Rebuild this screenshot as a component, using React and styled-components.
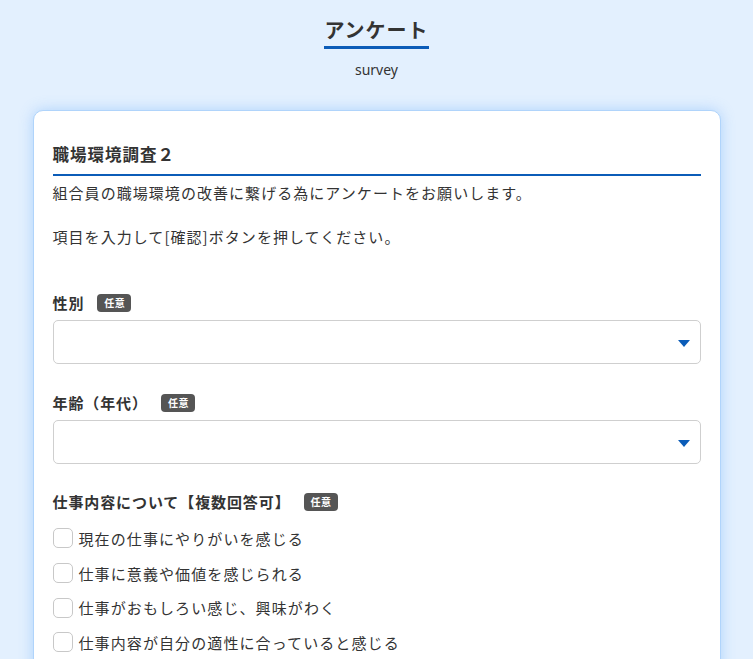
import React from "react";
import styled, { createGlobalStyle } from "styled-components";

const Global = createGlobalStyle`
  html, body { margin: 0; padding: 0; }
  body {
    background: #e3f0fe;
    font-family: "Noto Sans CJK JP", "Noto Sans", sans-serif;
    color: #333;
  }
`;

const Page = styled.div`
  display: flex;
  flex-direction: column;
  align-items: center;
  padding-top: 16px;
  min-height: 659px;
  box-sizing: border-box;
  overflow: hidden;
`;

const Title = styled.h1`
  margin: 0;
  font-size: 20px;
  line-height: 28px;
  font-weight: 700;
  letter-spacing: 0.05em;
  color: #333;
  padding-bottom: 2px;
  border-bottom: 3px solid #0b5cb8;
`;

const Subtitle = styled.div`
  font-family: "Noto Sans", sans-serif;
  font-size: 14px;
  line-height: 18px;
  margin-top: 12px;
  color: #333;
`;

const Card = styled.section`
  box-sizing: border-box;
  width: 688px;
  margin-top: 31px;
  background: #fff;
  border: 1px solid #b0d4fb;
  border-radius: 10px;
  box-shadow: 0 0 14px rgba(110, 175, 250, 0.45);
  padding: 31px 19px 40px;
`;

const Heading = styled.h2`
  margin: 0;
  font-size: 16.5px;
  line-height: 24px;
  font-weight: 700;
  letter-spacing: 0.06em;
  padding-bottom: 8px;
  border-bottom: 2px solid #0b5cb8;
`;

const Lead = styled.p`
  margin: ${(p) => p.$top}px 0 0;
  font-size: 15px;
  line-height: 24px;
  letter-spacing: 1.05px;
`;

const Field = styled.div`
  margin-top: ${(p) => p.$top}px;
`;

const LabelRow = styled.div`
  display: flex;
  align-items: center;
  gap: 13px;
  height: 24px;
`;

const Label = styled.span`
  font-size: 15px;
  font-weight: 700;
  letter-spacing: 0.9px;
  line-height: 24px;
`;

const Badge = styled.span`
  display: inline-flex;
  align-items: center;
  justify-content: center;
  height: 18px;
  padding: 0 6px 0 7px;
  border-radius: 4px;
  background: #555;
  color: #fff;
  font-size: 10px;
  font-weight: 700;
  letter-spacing: 0.5px;
  line-height: 1;
`;

const Select = styled.div`
  box-sizing: border-box;
  margin-top: 5px;
  height: 44px;
  border: 1px solid #cfcfcf;
  border-radius: 5px;
  background: #fff;
  display: flex;
  align-items: center;
  justify-content: flex-end;
  padding-right: 10px;
`;

const Arrow = styled.span`
  width: 0;
  height: 0;
  border-left: 6px solid transparent;
  border-right: 6px solid transparent;
  border-top: 7px solid #0b5cb8;
  margin-top: 2px;
`;

const Checks = styled.div`
  margin-top: 7px;
  display: flex;
  flex-direction: column;
`;

const CheckRow = styled.label`
  display: flex;
  align-items: center;
  gap: 6px;
  height: 34.7px;
  font-size: 15px;
  letter-spacing: 1.1px;
`;

const Box = styled.span`
  box-sizing: border-box;
  width: 20px;
  height: 20px;
  border: 1px solid #c8c8c8;
  border-radius: 5px;
  background: #fff;
  flex: none;
`;

const options = [
  "現在の仕事にやりがいを感じる",
  "仕事に意義や価値を感じられる",
  "仕事がおもしろい感じ、興味がわく",
  "仕事内容が自分の適性に合っていると感じる",
];

export default function App() {
  return (
    <>
      <Global />
      <Page>
        <Title>アンケート</Title>
        <Subtitle>survey</Subtitle>
        <Card>
          <Heading>職場環境調査２</Heading>
          <Lead $top={5}>組合員の職場環境の改善に繋げる為にアンケートをお願いします。</Lead>
          <Lead $top={20}>項目を入力して[確認]ボタンを押してください。</Lead>

          <Field $top={42}>
            <LabelRow>
              <Label>性別</Label>
              <Badge>任意</Badge>
            </LabelRow>
            <Select>
              <Arrow />
            </Select>
          </Field>

          <Field $top={27}>
            <LabelRow>
              <Label>年齢（年代）</Label>
              <Badge>任意</Badge>
            </LabelRow>
            <Select>
              <Arrow />
            </Select>
          </Field>

          <Field $top={26}>
            <LabelRow>
              <Label>仕事内容について【複数回答可】</Label>
              <Badge>任意</Badge>
            </LabelRow>
            <Checks>
              {options.map((o) => (
                <CheckRow key={o}>
                  <Box />
                  <span>{o}</span>
                </CheckRow>
              ))}
            </Checks>
          </Field>
        </Card>
      </Page>
    </>
  );
}
